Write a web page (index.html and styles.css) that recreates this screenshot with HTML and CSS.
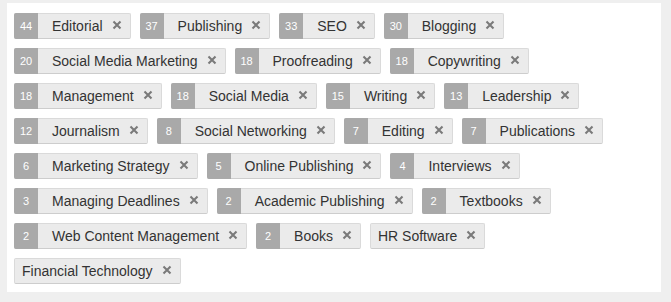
FILE: index.html
```html
<!DOCTYPE html>
<html>
<head>
<meta charset="utf-8">
<link rel="stylesheet" href="styles.css">
</head>
<body>
<div class="panel">
  <ul class="tags">
    <li class="tag"><span class="count">44</span><span class="label">Editorial</span><svg class="remove" viewBox="0 0 10 10"><path d="M1.5 1.5L8.5 8.5M8.5 1.5L1.5 8.5"/></svg></li>
    <li class="tag"><span class="count">37</span><span class="label">Publishing</span><svg class="remove" viewBox="0 0 10 10"><path d="M1.5 1.5L8.5 8.5M8.5 1.5L1.5 8.5"/></svg></li>
    <li class="tag"><span class="count">33</span><span class="label">SEO</span><svg class="remove" viewBox="0 0 10 10"><path d="M1.5 1.5L8.5 8.5M8.5 1.5L1.5 8.5"/></svg></li>
    <li class="tag"><span class="count">30</span><span class="label">Blogging</span><svg class="remove" viewBox="0 0 10 10"><path d="M1.5 1.5L8.5 8.5M8.5 1.5L1.5 8.5"/></svg></li>
    <li class="tag"><span class="count">20</span><span class="label">Social Media Marketing</span><svg class="remove" viewBox="0 0 10 10"><path d="M1.5 1.5L8.5 8.5M8.5 1.5L1.5 8.5"/></svg></li>
    <li class="tag"><span class="count">18</span><span class="label">Proofreading</span><svg class="remove" viewBox="0 0 10 10"><path d="M1.5 1.5L8.5 8.5M8.5 1.5L1.5 8.5"/></svg></li>
    <li class="tag"><span class="count">18</span><span class="label">Copywriting</span><svg class="remove" viewBox="0 0 10 10"><path d="M1.5 1.5L8.5 8.5M8.5 1.5L1.5 8.5"/></svg></li>
    <li class="tag"><span class="count">18</span><span class="label">Management</span><svg class="remove" viewBox="0 0 10 10"><path d="M1.5 1.5L8.5 8.5M8.5 1.5L1.5 8.5"/></svg></li>
    <li class="tag"><span class="count">18</span><span class="label">Social Media</span><svg class="remove" viewBox="0 0 10 10"><path d="M1.5 1.5L8.5 8.5M8.5 1.5L1.5 8.5"/></svg></li>
    <li class="tag"><span class="count">15</span><span class="label">Writing</span><svg class="remove" viewBox="0 0 10 10"><path d="M1.5 1.5L8.5 8.5M8.5 1.5L1.5 8.5"/></svg></li>
    <li class="tag"><span class="count">13</span><span class="label">Leadership</span><svg class="remove" viewBox="0 0 10 10"><path d="M1.5 1.5L8.5 8.5M8.5 1.5L1.5 8.5"/></svg></li>
    <li class="tag"><span class="count">12</span><span class="label">Journalism</span><svg class="remove" viewBox="0 0 10 10"><path d="M1.5 1.5L8.5 8.5M8.5 1.5L1.5 8.5"/></svg></li>
    <li class="tag"><span class="count">8</span><span class="label">Social Networking</span><svg class="remove" viewBox="0 0 10 10"><path d="M1.5 1.5L8.5 8.5M8.5 1.5L1.5 8.5"/></svg></li>
    <li class="tag"><span class="count">7</span><span class="label">Editing</span><svg class="remove" viewBox="0 0 10 10"><path d="M1.5 1.5L8.5 8.5M8.5 1.5L1.5 8.5"/></svg></li>
    <li class="tag"><span class="count">7</span><span class="label">Publications</span><svg class="remove" viewBox="0 0 10 10"><path d="M1.5 1.5L8.5 8.5M8.5 1.5L1.5 8.5"/></svg></li>
    <li class="tag"><span class="count">6</span><span class="label">Marketing Strategy</span><svg class="remove" viewBox="0 0 10 10"><path d="M1.5 1.5L8.5 8.5M8.5 1.5L1.5 8.5"/></svg></li>
    <li class="tag"><span class="count">5</span><span class="label">Online Publishing</span><svg class="remove" viewBox="0 0 10 10"><path d="M1.5 1.5L8.5 8.5M8.5 1.5L1.5 8.5"/></svg></li>
    <li class="tag"><span class="count">4</span><span class="label">Interviews</span><svg class="remove" viewBox="0 0 10 10"><path d="M1.5 1.5L8.5 8.5M8.5 1.5L1.5 8.5"/></svg></li>
    <li class="tag"><span class="count">3</span><span class="label">Managing Deadlines</span><svg class="remove" viewBox="0 0 10 10"><path d="M1.5 1.5L8.5 8.5M8.5 1.5L1.5 8.5"/></svg></li>
    <li class="tag"><span class="count">2</span><span class="label">Academic Publishing</span><svg class="remove" viewBox="0 0 10 10"><path d="M1.5 1.5L8.5 8.5M8.5 1.5L1.5 8.5"/></svg></li>
    <li class="tag"><span class="count">2</span><span class="label">Textbooks</span><svg class="remove" viewBox="0 0 10 10"><path d="M1.5 1.5L8.5 8.5M8.5 1.5L1.5 8.5"/></svg></li>
    <li class="tag"><span class="count">2</span><span class="label">Web Content Management</span><svg class="remove" viewBox="0 0 10 10"><path d="M1.5 1.5L8.5 8.5M8.5 1.5L1.5 8.5"/></svg></li>
    <li class="tag"><span class="count">2</span><span class="label">Books</span><svg class="remove" viewBox="0 0 10 10"><path d="M1.5 1.5L8.5 8.5M8.5 1.5L1.5 8.5"/></svg></li>
    <li class="tag"><span class="label">HR Software</span><svg class="remove" viewBox="0 0 10 10"><path d="M1.5 1.5L8.5 8.5M8.5 1.5L1.5 8.5"/></svg></li>
    <li class="tag"><span class="label">Financial Technology</span><svg class="remove" viewBox="0 0 10 10"><path d="M1.5 1.5L8.5 8.5M8.5 1.5L1.5 8.5"/></svg></li>
  </ul>
</div>
</body>
</html>
```

FILE: styles.css
```css
html, body {
  margin: 0;
  padding: 0;
  background: #efefef;
}
body {
  font-family: "Liberation Sans", Arial, sans-serif;
  color: #333;
}
.panel {
  margin: 3px 10px 0 7px;
  width: 654px;
  height: 289px;
  background: #fff;
  box-sizing: border-box;
  padding: 10px 7px 0 7px;
}
.tags {
  list-style: none;
  margin: 0;
  padding: 0;
  display: flex;
  flex-wrap: wrap;
  column-gap: 9px;
  row-gap: 9px;
}
.tag {
  display: flex;
  align-items: stretch;
  height: 26px;
  box-sizing: border-box;
  background: #ebebeb;
  border: 1px solid #dadada;
  border-bottom-color: #cdcdcd;
  border-radius: 2px;
  font-size: 14px;
  line-height: 24px;
  padding-right: 8px;
}
.count {
  width: 24px;
  margin: -1px 14px -1px -1px;
  background: #a9a9a9;
  color: #fff;
  font-size: 11px;
  line-height: 26px;
  text-align: center;
  border-radius: 2px 0 0 2px;
}
.label {
  padding-left: 7px;
}
.count + .label {
  padding-left: 0;
}
.remove {
  flex: none;
  align-self: flex-start;
  width: 10px;
  height: 10px;
  margin: 6px 0 0 9px;
  fill: none;
  stroke: #7a7a7a;
  stroke-width: 2.1;
  stroke-linecap: butt;
}
```
